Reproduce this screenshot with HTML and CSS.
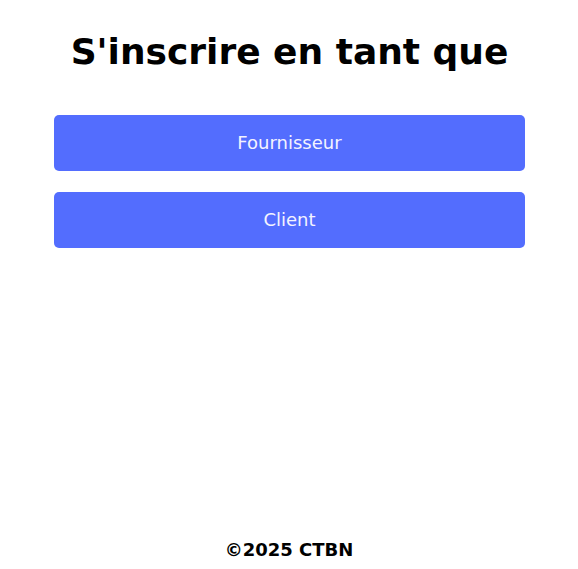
FILE: index.html
```html
<!DOCTYPE html>
<html lang="fr">
<head>
<meta charset="utf-8">
<link rel="stylesheet" href="styles.css">
</head>
<body>
<div class="page">
  <main class="main">
    <h1 class="title">S'inscrire en tant que</h1>
    <div class="choices">
      <button class="choice">Fournisseur</button>
      <button class="choice">Client</button>
    </div>
  </main>
  <footer class="footer">©2025 CTBN</footer>
</div>
</body>
</html>
```

FILE: styles.css
```css
html, body {
  margin: 0;
  padding: 0;
  background: #ffffff;
}
body {
  font-family: "DejaVu Sans", sans-serif;
  color: #000;
}
.page {
  min-height: 100vh;
  display: flex;
  flex-direction: column;
  box-sizing: border-box;
}
.main {
  flex: 1;
  padding: 0 53px 0 54px;
}
.title {
  margin: 30px 0 0;
  text-align: center;
  font-size: 36px;
  font-weight: bold;
  line-height: 44px;
}
.choices {
  display: flex;
  flex-direction: column;
  gap: 21px;
  margin-top: 41px;
}
.choice {
  height: 56px;
  padding: 0 0 2px;
  border: none;
  border-radius: 5px;
  background: #536dfe;
  color: #f3f3ff;
  font-family: "DejaVu Sans", sans-serif;
  font-size: 18px;
  cursor: pointer;
}
.footer {
  text-align: center;
  font-weight: bold;
  font-size: 18px;
  line-height: 22px;
  padding-bottom: 8px;
}
```
